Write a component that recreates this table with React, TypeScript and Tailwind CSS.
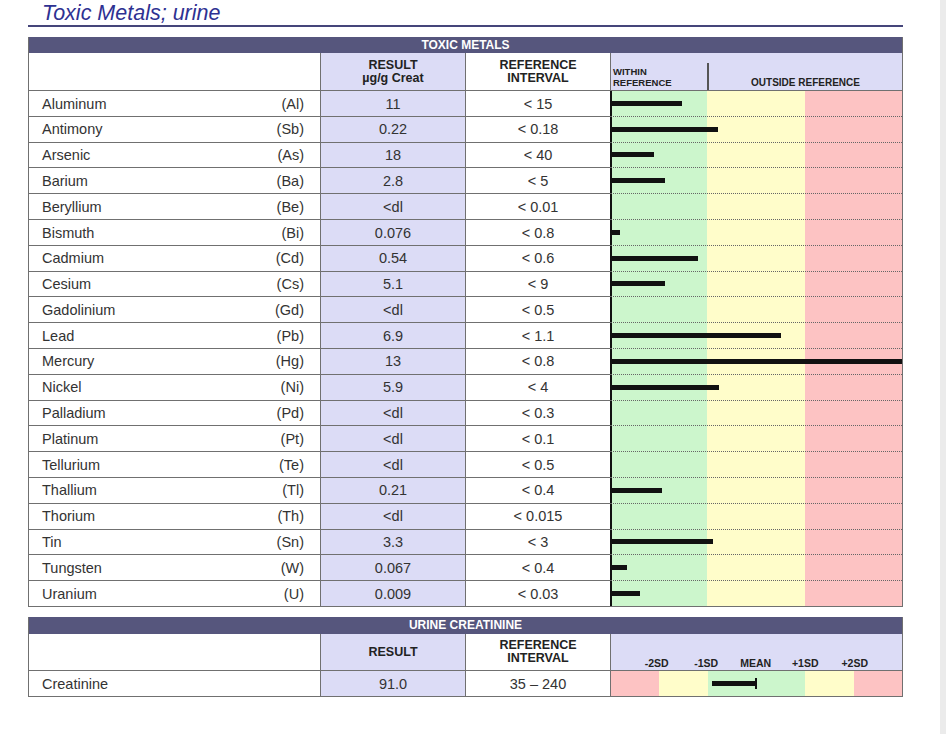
const metals: [string, string, string, string, number][] = [
  ['Aluminum', 'Al', '11', '< 15', 70],
  ['Antimony', 'Sb', '0.22', '< 0.18', 106],
  ['Arsenic', 'As', '18', '< 40', 42],
  ['Barium', 'Ba', '2.8', '< 5', 53],
  ['Beryllium', 'Be', '<dl', '< 0.01', 0],
  ['Bismuth', 'Bi', '0.076', '< 0.8', 8],
  ['Cadmium', 'Cd', '0.54', '< 0.6', 86],
  ['Cesium', 'Cs', '5.1', '< 9', 53],
  ['Gadolinium', 'Gd', '<dl', '< 0.5', 0],
  ['Lead', 'Pb', '6.9', '< 1.1', 169],
  ['Mercury', 'Hg', '13', '< 0.8', 290],
  ['Nickel', 'Ni', '5.9', '< 4', 107],
  ['Palladium', 'Pd', '<dl', '< 0.3', 0],
  ['Platinum', 'Pt', '<dl', '< 0.1', 0],
  ['Tellurium', 'Te', '<dl', '< 0.5', 0],
  ['Thallium', 'Tl', '0.21', '< 0.4', 50],
  ['Thorium', 'Th', '<dl', '< 0.015', 0],
  ['Tin', 'Sn', '3.3', '< 3', 101],
  ['Tungsten', 'W', '0.067', '< 0.4', 15],
  ['Uranium', 'U', '0.009', '< 0.03', 28],
];

function MetalRow({ row, last }: { row: [string, string, string, string, number]; last: boolean }) {
  const [name, sym, result, ref, bar] = row;
  return (
    <div className="grid grid-cols-[291px_145px_145px_292px] h-[25.8px] text-[14.5px] text-[#333]">
      <div className="flex items-center justify-between pl-[13px] pr-[16px] pt-[2px] border-b border-[#707070]">
        <span>{name}</span>
        <span>({sym})</span>
      </div>
      <div className="flex items-center justify-center pt-[2px] bg-[#dcdcf6] border-l border-b border-[#707070]">{result}</div>
      <div className="flex items-center justify-center pt-[2px] border-l border-b border-[#707070]">{ref}</div>
      <div
        className={
          'flex items-center bg-[linear-gradient(to_right,#ccf6cc_97px,#fffdca_97px,#fffdca_195px,#fdc3c3_195px)] ' +
          (last ? 'border-b border-[#707070]' : 'border-b border-dotted border-[#666]')
        }
      >
        <div className="w-[2px] self-stretch bg-[#111]" />
        {bar > 0 && <div className="h-[5px] bg-[#111]" style={{ width: bar }} />}
      </div>
    </div>
  );
}

export default function App() {
  return (
    <div className="flex w-[946px] h-[734px] bg-white font-['Liberation_Sans',Arial,sans-serif]">
      <div className="w-[940px] pl-[28px]">
        <div className="w-[875px]">
          <h1 className="pt-[1px] pl-[14px] text-[21.5px] leading-[24px] italic text-[#2e3192]">Toxic Metals; urine</h1>
          <div className="h-[2px] bg-[#45457a]" />

          {/* toxic metals table */}
          <div className="mt-[10px] border-x border-[#707070]">
            <div className="h-[16px] bg-[#56567d] flex items-center justify-center text-white font-bold text-[12px]">TOXIC METALS</div>
            <div className="grid grid-cols-[291px_145px_145px_292px] h-[38px] text-[#222] font-bold">
              <div className="border-b border-[#707070]" />
              <div className="flex flex-col items-center justify-center bg-[#dcdcf6] border-l border-b border-[#707070] text-[12.5px] leading-[13px]">
                <span>RESULT</span>
                <span>µg/g Creat</span>
              </div>
              <div className="flex flex-col items-center justify-center border-l border-b border-[#707070] text-[12.5px] leading-[13px]">
                <span>REFERENCE</span>
                <span>INTERVAL</span>
              </div>
              <div className="flex items-end bg-[#dcdcf6] border-l border-b border-[#707070] text-[9.5px] leading-[11px]">
                <div className="w-[96px] pl-[2px] pb-[2px] flex flex-col">
                  <span>WITHIN</span>
                  <span>REFERENCE</span>
                </div>
                <div className="w-[2px] h-[27px] bg-[#555]" />
                <div className="flex-1 text-center pb-[2px] text-[10px]">OUTSIDE REFERENCE</div>
              </div>
            </div>
            {metals.map((m, i) => (
              <MetalRow key={m[0]} row={m} last={i === metals.length - 1} />
            ))}
          </div>

          {/* urine creatinine table */}
          <div className="mt-[10px] border-x border-[#707070]">
            <div className="h-[17px] bg-[#56567d] flex items-center justify-center text-white font-bold text-[12px]">URINE CREATININE</div>
            <div className="grid grid-cols-[291px_145px_145px_292px] h-[37px] text-[#222] font-bold">
              <div className="border-b border-[#707070]" />
              <div className="flex items-center justify-center bg-[#dcdcf6] border-l border-b border-[#707070] text-[12.5px]">RESULT</div>
              <div className="flex flex-col items-center justify-center border-l border-b border-[#707070] text-[12.5px] leading-[13px]">
                <span>REFERENCE</span>
                <span>INTERVAL</span>
              </div>
              <div className="flex items-end pl-[21px] pb-[1px] bg-[#dcdcf6] border-l border-b border-[#707070] text-[10.5px] leading-[11px]">
                {['-2SD', '-1SD', 'MEAN', '+1SD', '+2SD'].map(l => (
                  <span key={l} className="w-[49.5px] text-center">{l}</span>
                ))}
              </div>
            </div>
            <div className="grid grid-cols-[291px_145px_145px_292px] h-[26px] text-[14.5px] text-[#333]">
              <div className="flex items-center pl-[13px] pt-[2px] border-b border-[#707070]">Creatinine</div>
              <div className="flex items-center justify-center pt-[2px] bg-[#dcdcf6] border-l border-b border-[#707070]">91.0</div>
              <div className="flex items-center justify-center pt-[2px] border-l border-b border-[#707070]">35 – 240</div>
              <div className="relative flex border-l border-b border-[#707070]">
                <div className="w-[48px] bg-[#fdc3c3]" />
                <div className="w-[49px] bg-[#fffdca]" />
                <div className="w-[97px] bg-[#ccf6cc]" />
                <div className="w-[49px] bg-[#fffdca]" />
                <div className="flex-1 bg-[#fdc3c3]" />
                <div className="absolute left-[101px] top-[10px] w-[44px] h-[5px] bg-[#111]" />
                <div className="absolute left-[144px] top-[7px] w-[2px] h-[11px] bg-[#111]" />
              </div>
            </div>
          </div>
        </div>
      </div>
      <div className="w-[6px] bg-[#ebebeb]" />
    </div>
  );
}
